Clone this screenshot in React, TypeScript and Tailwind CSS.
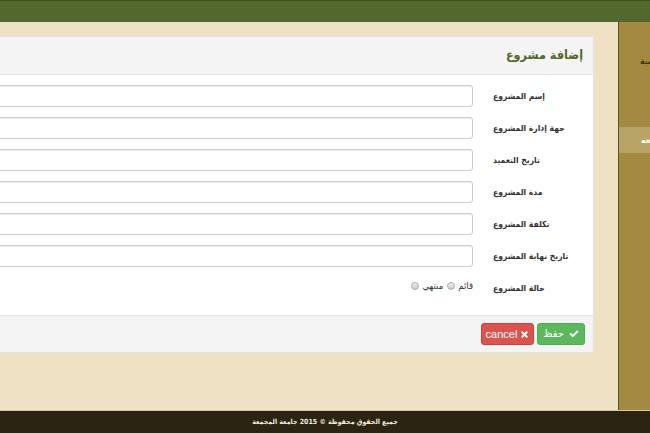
import { Check, X } from "lucide-react";

const fields = [
  "إسم المشروع",
  "جهة إدارة المشروع",
  "تاريخ التعميد",
  "مدة المشروع",
  "تكلفة المشروع",
  "تاريخ نهاية المشروع",
];

const arabic = {
  fontFamily: '"DejaVu Sans Condensed", "DejaVu Sans", "Liberation Sans", sans-serif',
};

function Radio({ label }: { label: string }) {
  return (
    <span className="flex items-center gap-[3px]" dir="rtl">
      <span className="text-[9.5px] text-[#333]">{label}</span>
      <span className="w-[8px] h-[8px] rounded-full border border-[#aaa] bg-gradient-to-b from-[#eee] to-[#ccc]" />
    </span>
  );
}

export default function App() {
  return (
    <div
      className="w-[650px] h-[433px] overflow-hidden bg-[#efe1c3] flex flex-col"
      style={arabic}
    >
      <div className="h-[22px] shrink-0 bg-[#52682c] border-t border-[#3d4f20]" />

      <div className="flex h-[388px] shrink-0 ml-[-300px] w-[1150px]">
        {/* main area */}
        <div className="w-[918px] pt-[14px] pr-[24px]">
          <div className="bg-white border border-[#e3e3e3] h-[317px] flex flex-col">
            <div className="h-[38px] bg-[#f4f4f4] border-b border-[#e6e6e6] flex items-center justify-end pr-[10px]">
              <h2 dir="rtl" className="text-[12.5px] font-bold text-[#52682c]">
                إضافة مشروع
              </h2>
            </div>

            <div className="flex-1 pt-[10px] flex flex-col gap-[10px]">
              {fields.map((f) => (
                <div key={f} className="flex items-center h-[22px]">
                  <div className="flex-1 h-[22px] bg-white border border-[#ccc] rounded-[3px] shadow-[inset_0_1px_1px_rgba(0,0,0,0.075)]" />
                  <div
                    dir="rtl"
                    className="w-[120px] pl-[20px] text-left text-[8.5px] font-bold text-[#333]"
                  >
                    {f}
                  </div>
                </div>
              ))}
              <div className="flex items-start h-[22px]">
                <div className="flex-1 flex justify-end gap-[4px] pt-[2px]">
                  <Radio label="منتهي" />
                  <Radio label="قائم" />
                </div>
                <div
                  dir="rtl"
                  className="w-[120px] pl-[20px] pt-[5px] text-left text-[8.5px] font-bold text-[#333]"
                >
                  حالة المشروع
                </div>
              </div>
            </div>

            <div className="h-[37px] bg-[#f4f4f4] border-t border-[#e6e6e6] flex items-center justify-end gap-[3px] pr-[8px]">
              <button
                dir="rtl"
                className="h-[22px] w-[53px] rounded-[3px] bg-[#d9534f] border border-[#d43f3a] text-white text-[11px] flex items-center justify-center gap-[3px]"
                style={{ fontFamily: '"Liberation Sans", sans-serif' }}
              >
                <X className="w-[9px] h-[9px]" strokeWidth={5} />
                <span>cancel</span>
              </button>
              <button
                dir="rtl"
                className="h-[22px] w-[48px] rounded-[3px] bg-[#5cb85c] border border-[#4cae4c] text-white text-[11px] flex items-center justify-center gap-[5px]"
              >
                <Check className="w-[10px] h-[10px]" strokeWidth={4.5} />
                <span>حفظ</span>
              </button>
            </div>
          </div>
        </div>

        {/* sidebar */}
        <div className="w-[232px] bg-[#a38a40] border-l border-[#4c5a24] flex flex-col">
          <div
            dir="rtl"
            className="mt-[26px] h-[26px] pl-[21px] text-[8.5px] font-bold text-[#3b3416] flex items-center justify-end whitespace-nowrap"
          >
            الصفحة الرئيسية
          </div>
          <div
            dir="rtl"
            className="mt-[53px] h-[26px] pl-[22px] bg-[#b9a468] text-[8.5px] font-bold text-white flex items-center justify-end whitespace-nowrap"
          >
            المشاريع التابعه
          </div>
        </div>
      </div>

      <div className="h-[23px] shrink-0 bg-[#2c2412] border-t border-[#d8c9a6] flex items-center justify-center">
        <p dir="rtl" className="text-[7px] font-bold text-[#f2ede0]">
          جميع الحقوق محفوظة © 2015 جامعة المجمعة
        </p>
      </div>
    </div>
  );
}
